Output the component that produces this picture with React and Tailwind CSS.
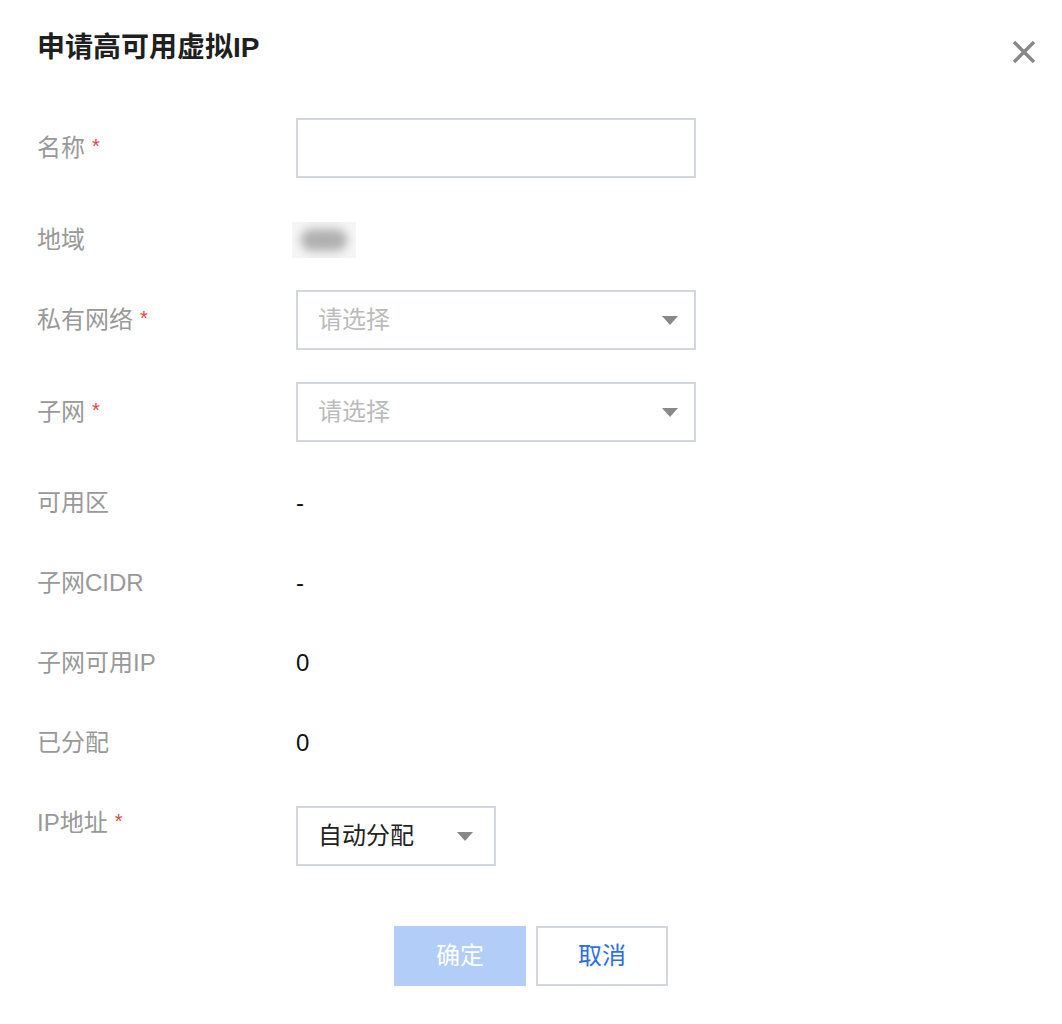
import React from "react";

const font = { fontFamily: '"Liberation Sans", "Noto Sans CJK SC", sans-serif' };

// Red required mark next to a label.
const Required = () => (
  <span className="ml-[7px] text-[20px] leading-none text-[#e54545] relative top-[-2px]">*</span>
);

const Caret = () => (
  <svg width="16" height="9" viewBox="0 0 16 9" className="shrink-0">
    <path d="M0 0 L16 0 L8 9 Z" fill="#888888" />
  </svg>
);

const Select = ({ value, placeholder, className = "" }) => (
  <div
    className={`flex items-center justify-between h-[60px] border-2 border-[#d2d6df] bg-white pl-[20px] ${className}`}
  >
    <span className={`text-[24px] leading-none ${value ? "text-[#222]" : "text-[#bbbbbb]"}`}>
      {value || placeholder}
    </span>
    <Caret />
  </div>
);

const Label = ({ children, required }) => (
  <div className="w-[259px] shrink-0 flex items-center text-[24px] leading-[34px] text-[#999999]">
    {children}
    {required && <Required />}
  </div>
);

// Plain text rows below the selects.
const infoRows = [
  { label: "可用区", value: "-" },
  { label: "子网CIDR", value: "-" },
  { label: "子网可用IP", value: "0" },
  { label: "已分配", value: "0" },
];

export default function App() {
  return (
    <div className="w-[1062px] h-[1024px] bg-white relative" style={font}>
      <button className="absolute left-[1012px] top-[40px] w-[24px] h-[24px]">
        <svg width="24" height="24" viewBox="0 0 24 24">
          <path d="M2 2 L22 22 M22 2 L2 22" stroke="#888888" strokeWidth="3.5" />
        </svg>
      </button>

      <div className="flex flex-col pl-[37px] pt-[30px]">
        <h1 className="text-[28px] leading-[36px] font-bold text-[#1f1f1f]">申请高可用虚拟IP</h1>

        {/* 名称 */}
        <div className="flex items-center mt-[52px]">
          <Label required>名称</Label>
          <input className="w-[400px] h-[60px] border-2 border-[#d2d6df] outline-none px-[20px] text-[24px]" />
        </div>

        {/* 地域 */}
        <div className="flex items-center mt-[38px] h-[48px]">
          <Label>地域</Label>
          <div className="w-[64px] h-[36px] -ml-[4px] bg-[#f5f5f5] flex items-center justify-center overflow-hidden">
            <div className="w-[46px] h-[22px] rounded-full bg-[#b0b0b0] blur-[5px]" />
          </div>
        </div>

        {/* 私有网络 */}
        <div className="flex items-center mt-[26px]">
          <Label required>私有网络</Label>
          <Select placeholder="请选择" className="w-[400px] pr-[16px]" />
        </div>

        {/* 子网 */}
        <div className="flex items-center mt-[32px]">
          <Label required>子网</Label>
          <Select placeholder="请选择" className="w-[400px] pr-[16px]" />
        </div>

        <div className="flex flex-col mt-[37px] gap-[32px]">
          {infoRows.map((row) => (
            <div key={row.label} className="flex items-center h-[48px]">
              <Label>{row.label}</Label>
              <span className="text-[24px] leading-none text-[#111]">{row.value}</span>
            </div>
          ))}
        </div>

        {/* IP地址 */}
        <div className="flex items-start mt-[39px]">
          <Label required>IP地址</Label>
          <Select value="自动分配" className="w-[200px] pr-[21px]" />
        </div>
      </div>

      <div className="flex justify-center gap-[10px] mt-[60px]">
        <button className="w-[132px] h-[60px] bg-[#b1cdf8] text-white text-[24px]">确定</button>
        <button className="w-[132px] h-[60px] border-2 border-[#d2d6df] bg-white text-[#2a6fe6] text-[24px]">
          取消
        </button>
      </div>
    </div>
  );
}
